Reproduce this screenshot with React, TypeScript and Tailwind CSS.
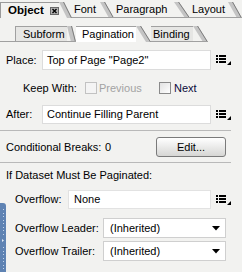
import React from "react"
import clsx from "clsx"

const Ear = ({w, h, line}: {w: number; h: number; line?: boolean}) => (
  <svg width={w} height={h} className="shrink-0 block">
    <polygon points={`0,0 5,0 ${w},${h} ${w - 5},${h}`} fill="#c4c4c4" />
    <line x1="4.5" y1="0" x2={w - 0.5} y2={h} stroke="#7c7c7c" />
    {line && <line x1="0" y1={h - 0.5} x2={w} y2={h - 0.5} stroke="#a0a0a0" />}
  </svg>
)

const ListIcon = () => (
  <svg width="16" height="10" viewBox="0 0 16 10" className="shrink-0">
    <rect x="0" y="0" width="2" height="2" fill="#000" />
    <rect x="3" y="0" width="7" height="2" fill="#000" />
    <rect x="0" y="3" width="2" height="2" fill="#000" />
    <rect x="3" y="3" width="7" height="2" fill="#000" />
    <rect x="0" y="6" width="2" height="2" fill="#000" />
    <rect x="3" y="6" width="7" height="2" fill="#000" />
    <polygon points="11,10 15,10 15,6" fill="#000" />
  </svg>
)

const Arrow = () => (
  <svg width="8" height="5" viewBox="0 0 8 5" className="shrink-0 mr-[5px]">
    <polygon points="0,0 8,0 4,4.5" fill="#000" />
  </svg>
)

const Check = ({disabled}: {disabled?: boolean}) => (
  <span
    className={clsx(
      "w-[12px] h-[12px] shrink-0 border",
      disabled ? "border-[#c2c2c2] bg-[#f4f4f4]" : "border-[#8a8a8a] bg-gradient-to-br from-[#e2e2e2] to-white"
    )}
  />
)

const Sep = ({className}: {className: string}) => <div className={clsx("h-px w-[231px] bg-[#b9b9b9]", className)} />

const Dropdown = ({value}: {value: string}) => (
  <div className="w-[123px] h-full bg-white border border-[#cfcfcf] flex items-center justify-between">
    <span className="pl-[6px]">{value}</span>
    <Arrow />
  </div>
)

const App = () => {
  return (
    <div className="relative w-[242px] h-[272px] overflow-hidden bg-[#f2f2f0] text-[11px] leading-none text-black font-['Liberation_Sans',Arial,sans-serif]">
      {/* main tabs */}
      <div className="flex h-[18px] items-end">
        <div className="w-[6px] h-[16px] border-b border-[#a0a0a0]" />
        <div className="flex h-[16px]">
          <div className="w-[59px] flex items-center pl-[7px] border-l border-t border-[#9a9a9a]">
            <span className="font-bold text-[11.5px]">Object</span>
            <svg width="9" height="8" viewBox="0 0 9 8" className="ml-[6px]">
              <rect x="0.5" y="0.5" width="8" height="7" fill="#b4b4b4" stroke="#6a6a6a" />
              <path d="M2.5 2 L6.5 6 M6.5 2 L2.5 6" stroke="#000" strokeWidth="1.4" />
            </svg>
          </div>
          <Ear w={13} h={16} />
        </div>
        <div className="flex h-[16px]">
          <div className="w-[28px] flex items-center pl-[2px] border-b border-[#a0a0a0]">Font</div>
          <Ear w={14} h={16} line />
        </div>
        <div className="flex h-[16px]">
          <div className="w-[60px] flex items-center pl-[2px] border-b border-[#a0a0a0]">Paragraph</div>
          <Ear w={16} h={16} line />
        </div>
        <div className="flex h-[16px]">
          <div className="w-[38px] flex items-center pl-[2px] border-b border-[#a0a0a0]">Layout</div>
          <Ear w={14} h={16} line />
        </div>
      </div>

      {/* sub tabs */}
      <div className="flex h-[16px] mt-[8px] items-end">
        <div className="w-[15px] h-[16px] border-b border-[#a0a0a0]" />
        <div className="flex h-[16px]">
          <div className="w-[52px] flex items-center pl-[7px] bg-[#e6e6e4] border-l border-t border-b border-[#a0a0a0]">Subform</div>
          <Ear w={9} h={16} line />
        </div>
        <div className="flex h-[16px]">
          <div className="w-[60px] flex items-center pl-[6px] bg-white border-t border-[#a0a0a0]">Pagination</div>
          <Ear w={15} h={16} />
        </div>
        <div className="flex h-[16px]">
          <div className="w-[42px] flex items-center pl-[2px] bg-[#e6e6e4] border-t border-b border-[#a0a0a0]">Binding</div>
          <Ear w={15} h={16} line />
        </div>
      </div>

      {/* Place */}
      <div className="flex items-center h-[20px] mt-[8px]">
        <span className="w-[42px] pl-[6px]">Place:</span>
        <div className="w-[169px] h-full bg-white border border-[#dcdcdc] flex items-center pl-[4px]">Top of Page "Page2"</div>
        <span className="ml-[5px]"><ListIcon /></span>
      </div>

      {/* Keep With */}
      <div className="flex items-center h-[20px] mt-[8px] pl-[23px]">
        <span className="w-[62px]">Keep With:</span>
        <Check disabled />
        <span className="w-[62px] pl-[2px] text-[#a3a3a3]">Previous</span>
        <Check />
        <span className="pl-[3px] text-[#0a0a3a]">Next</span>
      </div>

      {/* After */}
      <div className="flex items-center h-[19px] mt-[7px]">
        <span className="w-[42px] pl-[6px]">After:</span>
        <div className="w-[169px] h-full bg-white border border-[#dcdcdc] flex items-center pl-[4px]">Continue Filling Parent</div>
        <span className="ml-[5px]"><ListIcon /></span>
      </div>

      <Sep className="mt-[6px]" />

      {/* Conditional breaks */}
      <div className="flex items-center h-[20px] mt-[6px]">
        <span className="w-[105px] pl-[6px]">Conditional Breaks:</span>
        <span className="w-[51px]">0</span>
        <button className="w-[70px] h-full border border-[#7a7a7a] rounded-[3px] bg-gradient-to-b from-white to-[#d6d6d4] text-[11px] font-['Liberation_Sans',Arial,sans-serif]">
          Edit...
        </button>
      </div>

      <Sep className="mt-[5px]" />

      <div className="flex items-center h-[16px] mt-[4px] pl-[6px]">If Dataset Must Be Paginated:</div>

      {/* Overflow */}
      <div className="flex items-center h-[19px] mt-[7px]">
        <span className="w-[68px] pl-[15px]">Overflow:</span>
        <div className="w-[143px] h-full bg-white border border-[#e2e2e2] flex items-center pl-[5px]">None</div>
        <span className="ml-[5px]"><ListIcon /></span>
      </div>

      <div className="flex items-center h-[20px] mt-[9px]">
        <span className="w-[103px] pl-[15px]">Overflow Leader:</span>
        <Dropdown value="(Inherited)" />
      </div>

      <div className="flex items-center h-[20px] mt-[3px]">
        <span className="w-[103px] pl-[15px]">Overflow Trailer:</span>
        <Dropdown value="(Inherited)" />
      </div>

      {/* collapsed side handle */}
      <div className="absolute left-0 top-[203px] bottom-0 w-[6px] rounded-tr-[3px] bg-[#5f83b3] flex flex-col items-center pt-[6px] gap-[3px]">
        {Array.from({length: 8}).map((_, i) => (
          <span key={"a" + i} className="w-[1px] h-[1px] bg-[#c4d4ea]" />
        ))}
        <svg width="4" height="6" viewBox="0 0 4 6" className="my-[2px]">
          <polygon points="0,0 4,3 0,6" fill="#dfe8f5" />
        </svg>
        {Array.from({length: 8}).map((_, i) => (
          <span key={"b" + i} className="w-[1px] h-[1px] bg-[#c4d4ea]" />
        ))}
      </div>
    </div>
  )
}

export default App
